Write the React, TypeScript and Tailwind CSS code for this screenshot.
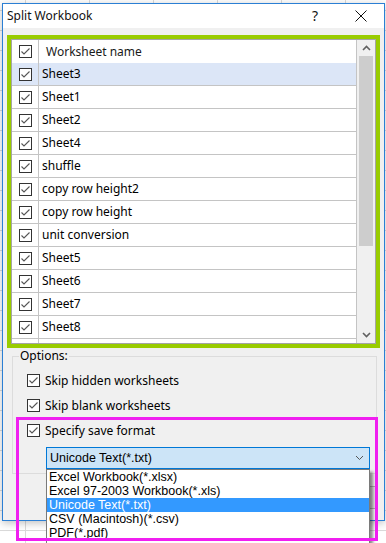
import React from "react";

const Box = ({ size = 13 }: { size?: number }) => (
  <svg width={size} height={size} viewBox="0 0 13 13" className="shrink-0">
    <rect x="0.5" y="0.5" width="12" height="12" fill="white" stroke="#333333" />
    <path d="M2.5 6.5 L5 9 L10.5 3.5" fill="none" stroke="#555555" strokeWidth="1.1" />
  </svg>
);

const sheets = [
  "Sheet3",
  "Sheet1",
  "Sheet2",
  "Sheet4",
  "shuffle",
  "copy row height2",
  "copy row height",
  "unit conversion",
  "Sheet5",
  "Sheet6",
  "Sheet7",
  "Sheet8",
  "",
];

const formats = [
  "Excel Workbook(*.xlsx)",
  "Excel 97-2003 Workbook(*.xls)",
  "Unicode Text(*.txt)",
  "CSV (Macintosh)(*.csv)",
  "PDF(*.pdf)",
];

export default function App() {
  return (
    <div className="relative w-[386px] h-[543px] overflow-hidden bg-white bg-[linear-gradient(to_right,#dadada_1px,transparent_1px),linear-gradient(to_bottom,#dadada_1px,transparent_1px)] bg-[size:64px_20px] bg-[position:25px_10px] font-['Noto_Sans',sans-serif] text-[12px] text-black">
      {/* window */}
      <div className="ml-[2px] mt-[3px] w-[383px] h-[518px] border border-[#2b7fd4] bg-[#f0f0f0] flex flex-col shadow-[0_2px_8px_rgba(0,0,0,0.25)]">
        {/* title bar */}
        <div className="h-[24px] bg-white flex items-center shrink-0">
          <span className="pl-[4px] text-[12px] leading-none text-[#111]">Split Workbook</span>
          <span className="ml-auto mr-[37px] text-[14px] leading-none text-[#111]">?</span>
          <svg width="12" height="12" viewBox="0 0 12 12" className="mr-[17px]">
            <path d="M0.5 0.5 L11.5 11.5 M11.5 0.5 L0.5 11.5" stroke="#111" strokeWidth="1" />
          </svg>
        </div>

        {/* body */}
        <div className="relative flex-1 pl-[4px] pt-[7px]">
          {/* green highlighted list */}
          <div className="w-[373px] h-[313px] border-4 border-[#99cc00]">
            <div className="w-[365px] h-[305px] border border-[#a5a5a5] bg-white flex">
              <div className="w-[345px] border-r border-[#c4c4c4] flex flex-col overflow-hidden">
                <div className="h-[23px] shrink-0 flex items-center">
                  <div className="w-[27px] h-full border-r border-[#c4c4c4] flex items-center justify-center">
                    <Box />
                  </div>
                  <span className="pl-[7px] text-[#1a1a1a]">Worksheet name</span>
                </div>
                {sheets.map((s, i) => (
                  <div
                    key={i}
                    className={
                      "h-[23px] shrink-0 flex items-center border-b border-[#c4c4c4] " +
                      (i === 0 ? "bg-[#dce6f7]" : "")
                    }
                  >
                    <div className="w-[27px] h-full border-r border-[#c4c4c4] flex items-center justify-center">
                      <Box />
                    </div>
                    <span className="pl-[3px]">{s}</span>
                  </div>
                ))}
              </div>
              {/* scrollbar */}
              <div className="w-[18px] bg-[#f0f0f0] flex flex-col">
                <div className="h-[16px] flex items-center justify-center">
                  <svg width="9" height="6" viewBox="0 0 9 6">
                    <path d="M1 5 L4.5 1.5 L8 5" fill="none" stroke="#606060" strokeWidth="1.6" />
                  </svg>
                </div>
                <div className="ml-[2px] w-[14px] h-[190px] bg-[#cdcdcd]" />
                <div className="flex-1" />
                <div className="h-[17px] flex items-center justify-center">
                  <svg width="9" height="6" viewBox="0 0 9 6">
                    <path d="M1 1 L4.5 4.5 L8 1" fill="none" stroke="#606060" strokeWidth="1.6" />
                  </svg>
                </div>
              </div>
            </div>
          </div>

          {/* options group */}
          <div className="relative ml-[5px] mt-[8px] w-[365px] h-[118px] border border-[#dcdcdc]">
            <span className="absolute -top-[9px] left-[6px] px-[1px] bg-[#f0f0f0] leading-[16px]">Options:</span>
            <div className="pl-[14px] pt-[11px] flex flex-col">
              <div className="h-[25px] flex items-center gap-[5px]">
                <Box />
                <span>Skip hidden worksheets</span>
              </div>
              <div className="h-[25px] flex items-center gap-[5px]">
                <Box />
                <span>Skip blank worksheets</span>
              </div>
              <div className="h-[25px] flex items-center gap-[5px]">
                <Box />
                <span>Specify save format</span>
              </div>
              <div className="relative z-10 ml-[19px] mt-[4px] w-[324px] h-[22px] border border-[#0078d7] bg-[#cce4f7] flex items-center">
                <span className="pl-[3px] font-['Liberation_Sans',sans-serif] text-[12.5px]">Unicode Text(*.txt)</span>
                <svg width="9" height="6" viewBox="0 0 9 6" className="ml-auto mr-[5px]">
                  <path d="M1 1 L4.5 4.5 L8 1" fill="none" stroke="#555" strokeWidth="1" />
                </svg>
                {/* dropdown list */}
                <div className="absolute left-[-1px] top-[21px] w-[324px] h-[90px] border border-[#7a7a7a] bg-white shadow-[3px_3px_3px_rgba(0,0,0,0.45)] font-['Liberation_Sans',sans-serif] text-[12.5px]">
                  {formats.map((f, i) => (
                    <div
                      key={i}
                      className={
                        "h-[14px] leading-[14px] pl-[2px] whitespace-nowrap " +
                        (i === 2 ? "bg-[#3399ff] text-white" : "")
                      }
                    >
                      {f}
                    </div>
                  ))}
                </div>
              </div>
            </div>
          </div>

          {/* button behind the dropdown */}
          <div className="ml-[294px] mt-[12px] w-[77px] h-[23px] border border-[#adadad] bg-[#e1e1e1]" />
        </div>
      </div>

      {/* magenta annotation */}
      <div className="absolute left-[16px] top-[417px] w-[362px] h-[124px] border-[3px] border-[#f01ff0] z-20 pointer-events-none" />
    </div>
  );
}
